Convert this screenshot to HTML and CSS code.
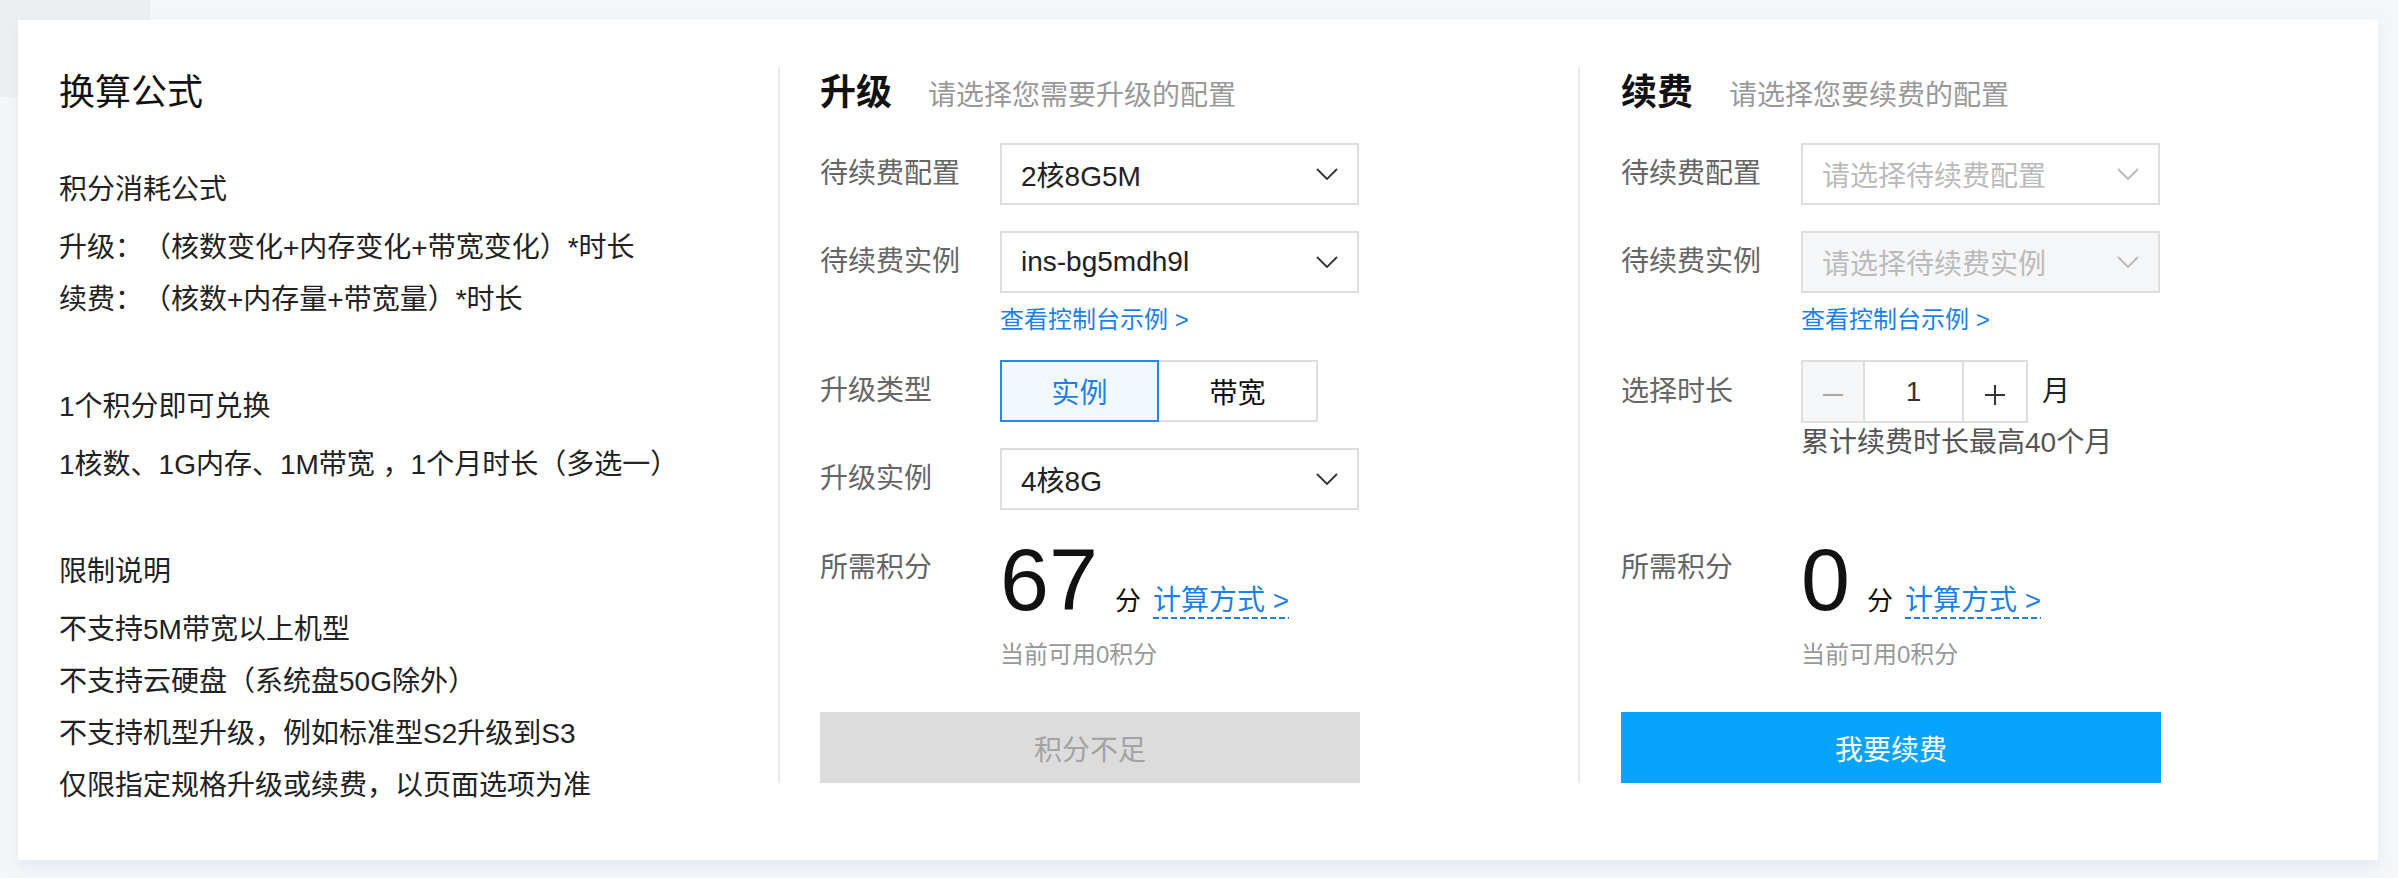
FILE: index.html
```html
<!DOCTYPE html>
<html lang="zh-CN">
<head>
<meta charset="utf-8">
<title>积分兑换</title>
<link rel="stylesheet" href="styles.css">
</head>
<body>
<div class="page">
  <div class="card">
    <section class="col col-formula">
      <h2 class="formula-title">换算公式</h2>
      <div class="block">
        <h3 class="block-head">积分消耗公式</h3>
        <p class="line">升级：（核数变化+内存变化+带宽变化）*时长</p>
        <p class="line">续费：（核数+内存量+带宽量）*时长</p>
      </div>
      <div class="block">
        <h3 class="block-head">1个积分即可兑换</h3>
        <p class="line">1核数、1G内存、1M带宽 ，1个月时长（多选一）</p>
      </div>
      <div class="block">
        <h3 class="block-head">限制说明</h3>
        <p class="line">不支持5M带宽以上机型</p>
        <p class="line">不支持云硬盘（系统盘50G除外）</p>
        <p class="line">不支持机型升级，例如标准型S2升级到S3</p>
        <p class="line">仅限指定规格升级或续费，以页面选项为准</p>
      </div>
    </section>

    <section class="col col-panel">
      <div class="panel-title"><span class="title">升级</span><span class="subtitle">请选择您需要升级的配置</span></div>
      <div class="row first">
        <span class="label">待续费配置</span>
        <div class="select"><span class="value">2核8G5M</span><svg class="chev" viewBox="0 0 22 12" width="22" height="12"><polyline points="1,1 11,11 21,1"/></svg></div>
      </div>
      <div class="row">
        <span class="label">待续费实例</span>
        <div class="select"><span class="value">ins-bg5mdh9l</span><svg class="chev" viewBox="0 0 22 12" width="22" height="12"><polyline points="1,1 11,11 21,1"/></svg></div>
      </div>
      <a class="console-link">查看控制台示例 &gt;</a>
      <div class="row seg-row">
        <span class="label">升级类型</span>
        <div class="segmented">
          <span class="seg active">实例</span>
          <span class="seg">带宽</span>
        </div>
      </div>
      <div class="row">
        <span class="label">升级实例</span>
        <div class="select"><span class="value">4核8G</span><svg class="chev" viewBox="0 0 22 12" width="22" height="12"><polyline points="1,1 11,11 21,1"/></svg></div>
      </div>
      <div class="points-row">
        <span class="label points-label">所需积分</span>
        <div class="points">
          <span class="num">67</span><span class="unit">分</span><a class="calc">计算方式 &gt;</a>
        </div>
      </div>
      <p class="avail">当前可用0积分</p>
      <button class="btn btn-disabled">积分不足</button>
    </section>

    <section class="col col-panel col-renew">
      <div class="panel-title"><span class="title">续费</span><span class="subtitle">请选择您要续费的配置</span></div>
      <div class="row first">
        <span class="label">待续费配置</span>
        <div class="select placeholder"><span class="value">请选择待续费配置</span><svg class="chev" viewBox="0 0 22 12" width="22" height="12"><polyline points="1,1 11,11 21,1"/></svg></div>
      </div>
      <div class="row">
        <span class="label">待续费实例</span>
        <div class="select placeholder disabled"><span class="value">请选择待续费实例</span><svg class="chev" viewBox="0 0 22 12" width="22" height="12"><polyline points="1,1 11,11 21,1"/></svg></div>
      </div>
      <a class="console-link">查看控制台示例 &gt;</a>
      <div class="row seg-row">
        <span class="label">选择时长</span>
        <div class="stepper">
          <span class="step minus"><i class="minus-bar"></i></span>
          <span class="step count">1</span>
          <span class="step plus"><svg viewBox="0 0 20 20" width="20" height="20"><path d="M10 0V20M0 10H20"/></svg></span>
        </div>
        <span class="month">月</span>
      </div>
      <p class="limit">累计续费时长最高40个月</p>
      <div class="points-row renew-points">
        <span class="label points-label">所需积分</span>
        <div class="points">
          <span class="num">0</span><span class="unit">分</span><a class="calc">计算方式 &gt;</a>
        </div>
      </div>
      <p class="avail">当前可用0积分</p>
      <button class="btn btn-primary">我要续费</button>
    </section>
  </div>
</div>
</body>
</html>
```

FILE: styles.css
```css
* { box-sizing: border-box; }

html, body {
  margin: 0;
  padding: 0;
}

body {
  width: 2398px;
  height: 878px;
  overflow: hidden;
  background: linear-gradient(#eceff1, #eceff1) no-repeat 0 0 / 150px 97px, #f4f7f9;
  font-family: "Liberation Sans", "Noto Sans CJK SC", sans-serif;
  color: #222;
  text-spacing-trim: space-all;
}

.page {
  padding: 20px 0 0 18px;
}

.card {
  width: 2360px;
  height: 840px;
  background: #fff;
  display: flex;
  padding-top: 47px;
  box-shadow: 0 6px 12px rgba(205, 218, 232, 0.45);
}

.col {
  height: 716px;
}

/* ---------- left column ---------- */
.col-formula {
  width: 760px;
  padding-left: 41px;
}

.formula-title {
  margin: 0;
  font-size: 36px;
  font-weight: normal;
  line-height: 52px;
  color: #111;
}

.block { margin-top: 55px; }
.block:first-of-type { margin-top: 45px; }

.block-head {
  margin: 0 0 6px;
  font-size: 28px;
  font-weight: normal;
  line-height: 52px;
  color: #222;
}

.line {
  margin: 0;
  font-size: 28px;
  line-height: 52px;
  color: #222;
}

/* ---------- panels ---------- */
.col-panel {
  width: 800px;
  border-left: 2px solid #e9e9e9;
  padding-left: 40px;
}

.col-renew {
  width: 798px;
  padding-left: 41px;
}

.panel-title {
  display: flex;
  align-items: baseline;
  height: 52px;
  line-height: 52px;
}

.title {
  font-size: 36px;
  font-weight: bold;
  color: #111;
}

.subtitle {
  margin-left: 36px;
  font-size: 28px;
  color: #999;
}

.row {
  display: flex;
  align-items: center;
  margin-top: 26px;
}

.row.first { margin-top: 24px; }
.row.seg-row { margin-top: 22px; }

.label {
  width: 180px;
  flex: none;
  font-size: 28px;
  line-height: 40px;
  color: #666;
}

.select {
  width: 359px;
  height: 62px;
  border: 2px solid #dedede;
  background: #fff;
  display: flex;
  align-items: center;
  justify-content: space-between;
  padding: 0 19px 0 19px;
  font-size: 28px;
  color: #222;
}

.select .chev {
  fill: none;
  stroke: #333;
  stroke-width: 1.8;
}

.select.placeholder { color: #bbb; }
.select.placeholder .chev { stroke: #b8b8b8; }
.select.disabled { background: #f5f6f8; }

.console-link {
  display: block;
  margin: 9px 0 0 180px;
  font-size: 24px;
  line-height: 36px;
  color: #1d7fe9;
  width: fit-content;
}

.segmented {
  display: flex;
  height: 62px;
}

.seg {
  width: 159px;
  height: 62px;
  border: 2px solid #dedede;
  display: flex;
  align-items: center;
  justify-content: center;
  font-size: 28px;
  color: #111;
}

.seg + .seg { border-left: none; }

.seg.active {
  border-color: #2c86e8;
  background: #f3f8fe;
  color: #1d7fe9;
}

/* stepper */
.stepper {
  display: flex;
  height: 63px;
  border: 2px solid #dedede;
}

.step {
  display: flex;
  align-items: center;
  justify-content: center;
  font-size: 28px;
  color: #333;
}

.step.minus {
  width: 62px;
  background: #f5f6f8;
  border-right: 2px solid #dedede;
}

.minus-bar {
  display: block;
  width: 20px;
  height: 2px;
  margin-top: 6px;
  background: #a8a8a8;
}

.step.count {
  width: 99px;
  border-right: 2px solid #dedede;
}

.step.plus { width: 62px; }

.step.plus svg {
  fill: none;
  stroke: #333;
  stroke-width: 2;
  margin-top: 6px;
}

.month {
  margin-left: 14px;
  font-size: 28px;
  line-height: 40px;
  color: #222;
}

.limit {
  margin: 0 0 0 180px;
  font-size: 28px;
  line-height: 40px;
  color: #555;
}

/* points */
.points-row {
  display: flex;
  align-items: flex-start;
  margin-top: 26px;
}

.renew-points { margin-top: 73px; }

.points-label { padding-top: 12px; }

.points {
  display: flex;
  align-items: baseline;
  height: 88px;
}

.num {
  font-family: "Liberation Sans", sans-serif;
  font-size: 88px;
  line-height: 88px;
  color: #111;
}

.unit {
  margin-left: 17px;
  font-size: 26px;
  line-height: 36px;
  color: #111;
}

.calc {
  margin-left: 12px;
  font-size: 28px;
  line-height: 36px;
  color: #1d7fe9;
  background: repeating-linear-gradient(to right, #1d7fe9 0 6px, transparent 6px 9px) no-repeat left bottom / 100% 2px;
}

.avail {
  margin: 13px 0 0 180px;
  font-size: 24px;
  line-height: 36px;
  color: #999;
}

.btn {
  display: block;
  margin-top: 39px;
  width: 540px;
  height: 71px;
  border: none;
  font-family: "Liberation Sans", "Noto Sans CJK SC", sans-serif;
  font-size: 28px;
  padding: 0;
}

.btn-disabled {
  background: #dcdcdc;
  color: #a3a3a3;
}

.btn-primary {
  background: #06a4ff;
  color: #fff;
}
```
